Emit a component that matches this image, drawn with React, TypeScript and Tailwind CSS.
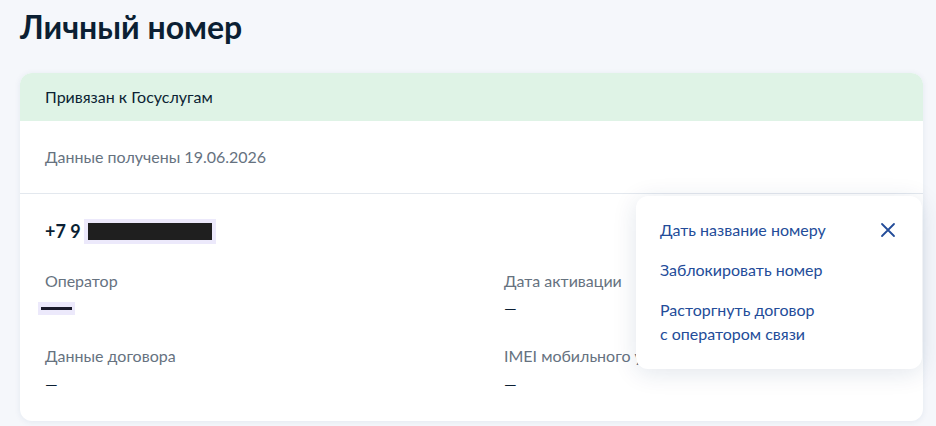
import React from "react";

export default function App() {
  return (
    <div
      className="w-[936px] h-[426px] overflow-hidden bg-[#f5f7fb] px-5 pt-[8px]"
      style={{ fontFamily: "Lato, 'Noto Sans', sans-serif" }}
    >
      <h1 className="text-[32px] leading-[38px] font-bold text-[#0b1f33]">Личный номер</h1>
      <div className="relative mt-[27px] w-[903px] bg-white rounded-xl shadow-[0_1px_6px_rgba(30,60,110,0.08)]">
        <div className="h-12 rounded-t-xl bg-[#dff3e6] px-[25px] flex items-center text-[16px] text-[#0b1f33]">
          Привязан к Госуслугам
        </div>
        <div className="h-[73px] px-[25px] flex items-center text-[16px] text-[#66727f] border-b border-[#e3e8ee]">
          Данные получены 19.06.2026
        </div>
        <div className="px-[25px] pt-[25px] pb-[21px]">
          <div className="flex items-center h-6 text-[18px] font-bold text-[#0b1f33]">
            <span>+7 9</span>
            <span className="ml-[3px] bg-[#ece9fb] px-1 py-1 flex">
              <span className="block w-[124px] h-[17px] bg-[#1f1f1f]"></span>
            </span>
          </div>
          <div className="grid grid-cols-[459px_1fr] mt-[26px] gap-y-[21px] text-[16px]">
            <div>
              <div className="leading-6 text-[#66727f]">Оператор</div>
              <div className="h-[30px] flex items-center">
                <span className="ml-[-7px] bg-[#ece9fb] px-[3px] py-[5px] flex">
                  <span className="block w-[31px] h-[3px] bg-[#1a1a2a]"></span>
                </span>
              </div>
            </div>
            <div>
              <div className="leading-6 text-[#66727f]">Дата активации</div>
              <div className="leading-[30px] text-[#0b1f33]">—</div>
            </div>
            <div>
              <div className="leading-6 text-[#66727f]">Данные договора</div>
              <div className="leading-[32px] text-[#0b1f33]">—</div>
            </div>
            <div>
              <div className="leading-6 text-[#66727f]">IMEI мобильного устройства</div>
              <div className="leading-[32px] text-[#0b1f33]">—</div>
            </div>
          </div>
        </div>

        <div className="absolute right-[1px] top-[123px] w-[286px] bg-white rounded-xl shadow-[0_4px_24px_rgba(20,50,100,0.12)] pl-6 pr-[26px] pt-[22px] pb-[23px]">
          <div className="flex flex-col gap-4 text-[16px] leading-6 text-[#234c99]">
            <div className="flex items-center justify-between">
              <span>Дать название номеру</span>
              <svg width="16" height="16" viewBox="0 0 16 16" fill="none" stroke="#234c99" strokeWidth="1.8" strokeLinecap="round">
                <path d="M2 2L14 14M14 2L2 14" />
              </svg>
            </div>
            <div>Заблокировать номер</div>
            <div>
              Расторгнуть договор
              <br />с оператором связи
            </div>
          </div>
        </div>
      </div>
    </div>
  );
}
